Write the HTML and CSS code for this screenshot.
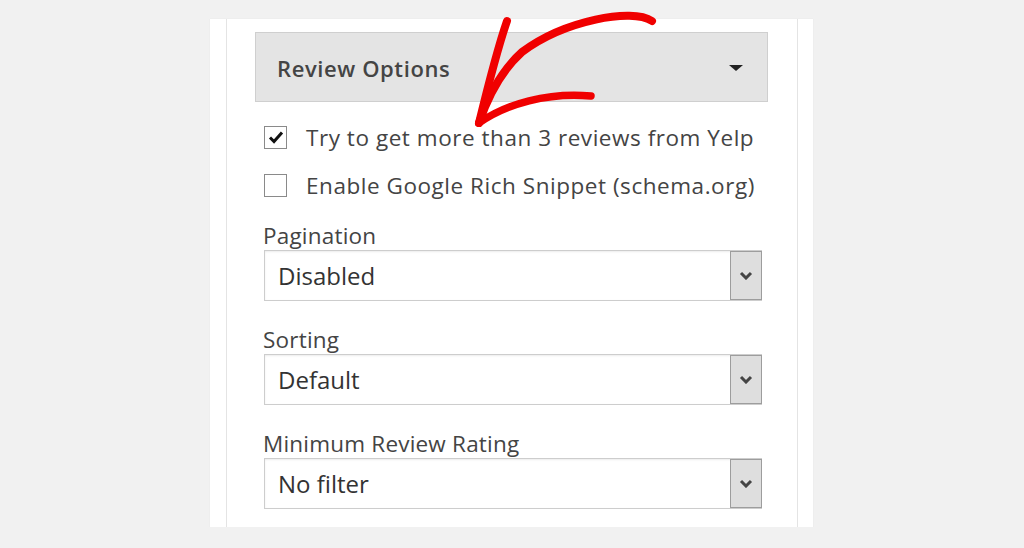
FILE: index.html
```html
<!DOCTYPE html>
<html lang="en">
<head>
    <meta charset="UTF-8">
    <meta name="viewport" content="width=device-width, initial-scale=1.0">
    <title>Review Options</title>
    <link rel="stylesheet" href="styles.css">
</head>
<body>

    <div class="panel">
        <div class="inner">
            <div class="section-head">
                <span>Review Options</span>
                <span class="caret"></span>
            </div>

            <label class="check-row">
                <span class="box checked">
                    <svg width="16" height="14" viewBox="0 0 16 14"><path d="M2 7.5 L6 11.5 L14 2.5" fill="none" stroke="#111" stroke-width="3"/></svg>
                </span>
                Try to get more than 3 reviews from Yelp
            </label>
            <label class="check-row">
                <span class="box"></span>
                Enable Google Rich Snippet (schema.org)
            </label>

            <div class="field">
                <div class="field-label">Pagination</div>
                <div class="select">
                    <span class="value">Disabled</span>
                    <span class="select-btn"><svg width="14" height="9" viewBox="0 0 14 9"><path d="M2 2 L7 7 L12 2" fill="none" stroke="#444" stroke-width="3"/></svg></span>
                </div>
            </div>

            <div class="field">
                <div class="field-label">Sorting</div>
                <div class="select">
                    <span class="value">Default</span>
                    <span class="select-btn"><svg width="14" height="9" viewBox="0 0 14 9"><path d="M2 2 L7 7 L12 2" fill="none" stroke="#444" stroke-width="3"/></svg></span>
                </div>
            </div>

            <div class="field">
                <div class="field-label">Minimum Review Rating</div>
                <div class="select">
                    <span class="value">No filter</span>
                    <span class="select-btn"><svg width="14" height="9" viewBox="0 0 14 9"><path d="M2 2 L7 7 L12 2" fill="none" stroke="#444" stroke-width="3"/></svg></span>
                </div>
            </div>
        </div>
    </div>

    <!-- hand drawn red arrow on top of the screenshot -->
    <svg class="annotation" width="1024" height="548" viewBox="0 0 1024 548">
        <g fill="none" stroke="#f00000" stroke-linecap="round" stroke-linejoin="round">
            <path d="M652 21 C632 8 565 20 522 52 C502 70 488 96 479 123" stroke-width="8"/>
            <path d="M507 21 C497 50 488 86 479 123" stroke-width="8"/>
            <path d="M479 123 C506 104 548 92 591 96" stroke-width="7.5"/>
        </g>
    </svg>

</body>
</html>
```

FILE: styles.css
```css
body {
    margin: 0;
    background-color: #f1f1f1;
    font-family: "Open Sans", "Noto Sans", sans-serif;
    color: #3c3c3c;
}
.panel {
    width: 572px;
    height: 508px;
    margin: 19px 0 0 210px;
    padding: 0 15px 0 16px;
    background-color: #fff;
    box-shadow: 0 0 1px rgba(0,0,0,0.08);
}
.inner {
    height: 100%;
    box-sizing: border-box;
    padding: 13px 29px 0 28px;
    border-left: 1px solid #e4e4e4;
    border-right: 1px solid #e4e4e4;
}
.section-head {
    height: 66px;
    display: flex;
    align-items: center;
    justify-content: space-between;
    padding: 2px 24px 0 21px;
    background-color: #e4e4e4;
    border: 1px solid #cfcfcf;
    font-size: 22px;
    letter-spacing: 0.6px;
    font-weight: 600;
    color: #444;
}
.caret {
    width: 0;
    height: 0;
    border-left: 7px solid transparent;
    border-right: 7px solid transparent;
    border-top: 6px solid #222;
}
.check-row {
    display: flex;
    align-items: center;
    height: 48px;
    margin-left: 9px;
    font-size: 22.5px;
    letter-spacing: 0.54px;
    color: #444;
}
.check-row:first-of-type {
    margin-top: 11px;
}
.box {
    width: 21px;
    height: 21px;
    border: 1px solid #8a8a8a;
    margin-right: 19px;
    display: flex;
    align-items: center;
    justify-content: center;
    background-color: #fff;
}
.field {
    margin-left: 9px;
    width: 498px;
    margin-top: 25px;
}
.check-row + .field {
    margin-top: 13px;
}
.field-label {
    height: 28px;
    line-height: 28px;
    font-size: 22.5px;
    letter-spacing: 0.2px;
    color: #444;
    margin-left: -1px;
}
.select {
    height: 51px;
    box-sizing: border-box;
    border: 1px solid #cdcdcd;
    box-shadow: inset 0 1px 2px rgba(0,0,0,0.08);
    display: flex;
    align-items: center;
    justify-content: space-between;
    padding-left: 13px;
}
.value {
    font-size: 24px;
    color: #333;
}
.select-btn {
    width: 30px;
    height: 47px;
    margin-right: -1px;
    border: 1px solid #9d9d9d;
    background-color: #dedede;
    display: flex;
    align-items: center;
    justify-content: center;
}
.annotation {
    position: absolute;
    top: 0;
    left: 0;
    pointer-events: none;
}
```
